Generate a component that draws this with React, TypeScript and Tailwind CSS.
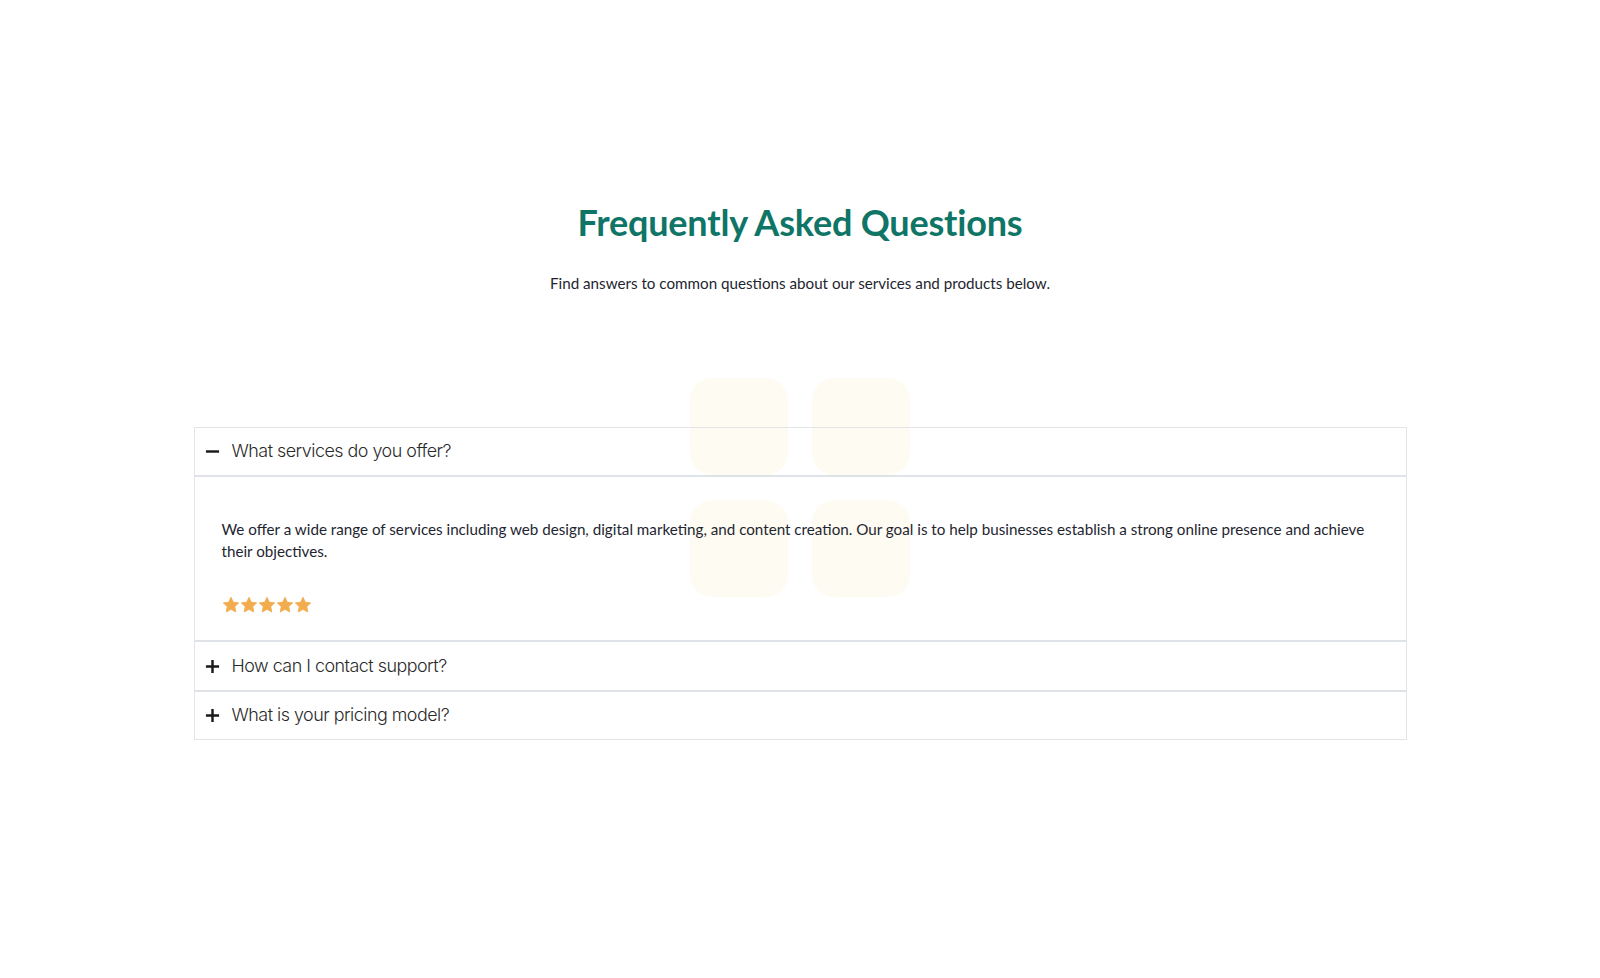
import React, { useState } from "react";

const faqs = [
  {
    q: "What services do you offer?",
    a: "We offer a wide range of services including web design, digital marketing, and content creation. Our goal is to help businesses establish a strong online presence and achieve their objectives.",
  },
  {
    q: "How can I contact support?",
    a: "You can reach our support team by email or phone, and we usually respond within one business day.",
  },
  {
    q: "What is your pricing model?",
    a: "Our pricing depends on the scope of each project. Contact us for a custom quote.",
  },
];

function Star() {
  return (
    <svg viewBox="0 0 24 24" className="w-[18px] h-[18px]" fill="#f2ac4e">
      <path d="M12 1.8l3.1 6.5 7.1.9-5.2 4.9 1.3 7.1L12 17.8l-6.3 3.4 1.3-7.1-5.2-4.9 7.1-.9z" strokeLinejoin="round" stroke="#f2ac4e" strokeWidth={1.2} />
    </svg>
  );
}

function App() {
  const [open, setOpen] = useState<number | null>(0);

  return (
    <div className="min-h-screen bg-white font-['Lato',sans-serif] text-[#1f2937]">
      <div className="pt-[200px] text-center">
        <h1 className="text-[36px] leading-[44px] font-bold text-[#0f7566] tracking-[-0.2px]">Frequently Asked Questions</h1>
        <p className="mt-[27px] text-[15.2px] leading-6 text-[#1e2530]">
          Find answers to common questions about our services and products below.
        </p>
      </div>

      <div className="relative mx-auto mt-[132px] w-[1213px]">
        {/* decorative squares behind */}
        <div className="absolute left-[496px] top-[-49px] grid grid-cols-2 gap-x-[24px] gap-y-[25px] pointer-events-none">
          <div className="w-[98px] h-[97px] rounded-[22px] bg-[#fefcf2]" />
          <div className="w-[98px] h-[97px] rounded-[22px] bg-[#fefcf2]" />
          <div className="w-[98px] h-[97px] rounded-[22px] bg-[#fefcf2]" />
          <div className="w-[98px] h-[97px] rounded-[22px] bg-[#fefcf2]" />
        </div>

        <div className="relative border border-[#e2e4e8]">
          {faqs.map((f, i) => (
            <div key={i} className={i < faqs.length - 1 ? "border-b-2 border-[#dfe2e6]" : ""}>
              <button
                onClick={() => setOpen(open === i ? null : i)}
                className={`flex w-full items-center gap-[11px] px-[10px] text-left ${i === 0 ? "h-[49px]" : i === 1 ? "h-[48px]" : "h-[47px]"} ${open === i ? "border-b-2 border-[#dfe2e6]" : ""}`}
              >
                <span className="flex w-[16px] justify-center">
                  {open === i ? (
                    <svg viewBox="0 0 16 16" className="w-[15px] h-[15px]">
                      <path d="M1 8h14" stroke="#1a1a1a" strokeWidth={2.6} />
                    </svg>
                  ) : (
                    <svg viewBox="0 0 16 16" className="w-[15px] h-[15px]">
                      <path d="M1 8h14M8 1v14" stroke="#1a1a1a" strokeWidth={2.6} />
                    </svg>
                  )}
                </span>
                <span className="font-['Inter',sans-serif] text-[17.9px] font-light text-[#2a2a2a] tracking-[-0.5px]">{f.q}</span>
              </button>
              {open === i && (
                <div className="px-[27px] pt-[41px] pb-[26px]">
                  <p className="text-[15.2px] leading-[22px] text-[#1e2530]">{f.a}</p>
                  <div className="mt-[34px] flex gap-0">
                    <Star />
                    <Star />
                    <Star />
                    <Star />
                    <Star />
                  </div>
                </div>
              )}
            </div>
          ))}
        </div>
      </div>
    </div>
  );
}

export default App;
